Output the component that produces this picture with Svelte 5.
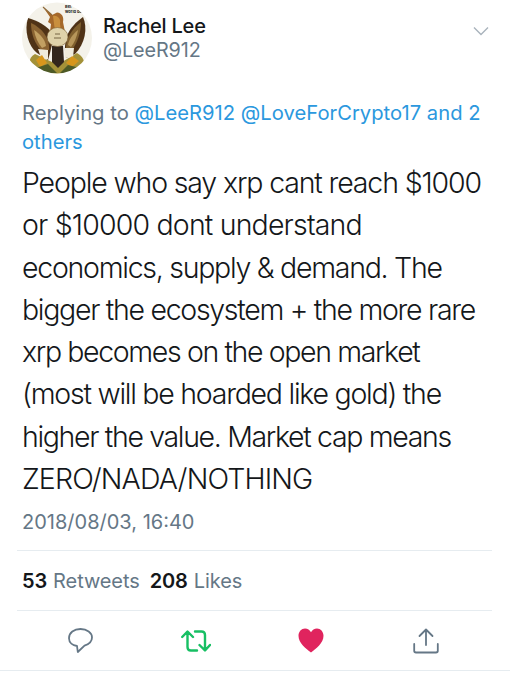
<script>
  const lines = [
    { text: 'People who say xrp cant reach $1000', track: -1.15 },
    { text: 'or $10000 dont understand', track: -0.83 },
    { text: 'economics, supply & demand. The', track: -1.27 },
    { text: 'bigger the ecosystem + the more rare', track: -1.3 },
    { text: 'xrp becomes on the open market', track: -1.38 },
    { text: '(most will be hoarded like gold) the', track: -1.25 },
    { text: 'higher the value. Market cap means', track: -1.34 },
    { text: 'ZERO/NADA/NOTHING', track: -0.87 }
  ];
</script>

<main class="page">
  <header class="head">
    <svg class="avatar" viewBox="0 0 70 72" width="70" height="72" aria-hidden="true">
      <defs>
        <clipPath id="c"><ellipse cx="35" cy="36" rx="35" ry="35.5" /></clipPath>
        <filter id="soft" x="-5%" y="-5%" width="110%" height="110%"><feGaussianBlur stdDeviation="0.55" /></filter>
      </defs>
      <g clip-path="url(#c)">
        <rect width="70" height="72" fill="#f4f2ea" />
        <g filter="url(#soft)">
          <path d="M6 16C2 28 6 44 15 51L26 58C29 48 31 40 31 32C26 24 14 18 6 16Z" fill="#4f3319" />
          <path d="M61 15C66 26 63 42 53 52L44 56C42 48 43 40 45 34C48 26 54 20 61 15Z" fill="#4f3319" />
          <path d="M9 21C9 32 13 42 19 48L27 48C28 36 20 26 9 21Z" fill="#8a6431" />
          <path d="M59 20C59 31 55 41 50 48L44 46C44 36 50 27 59 20Z" fill="#80602f" />
          <path d="M12 28C13 35 16 41 20 46L24 44C23 37 18 32 12 28Z" fill="#c2a062" />
          <path d="M56 28C55 35 52 41 49 45L46 43C47 37 51 32 56 28Z" fill="#b7965a" />
          <path d="M21 5L30 13L35 10.5C40 11 42 15 41 20L43 30L28 30L29 22L26 20L28 15Z" fill="#a5682a" />
          <path d="M31 14C36 13 39 17 38 22L39 29L33 29Z" fill="#c98f3e" />
          <path d="M21 5L30 13" stroke="#8e6a3c" stroke-width="1.1" />
          <path d="M13 52C5 56 7 64 13 72H58C64 64 64 56 55 51L40 60H30Z" fill="#a39138" />
          <path d="M16 47L26 48V57L20 58Z" fill="#efebdc" />
          <path d="M43 46L52 46L51 55L43 56Z" fill="#efebdc" />
          <path d="M30 44H41L42 60L36 66L30 60Z" fill="#33261f" />
          <path d="M14 58L20 53L25 61L18 65ZM44 61L50 54L57 59L50 65Z" fill="#d6961f" />
          <path d="M14 66L26 62L35 71H14ZM38 71L46 63L58 66L52 71Z" fill="#4d5a26" />
          <ellipse cx="35.5" cy="35" rx="10.5" ry="9.5" fill="#dfd2aa" stroke="#7d6033" stroke-width="0.6" />
          <path d="M33 32H38M32 36H39" stroke="#5b4a2c" stroke-width="0.8" />
        </g>
        <text class="tiny" x="43" y="6">Bet</text>
        <text class="tiny" x="43" y="11">world do</text>
      </g>
    </svg>
    <div class="who">
      <div class="name">Rachel Lee</div>
      <div class="handle">@LeeR912</div>
    </div>
    <svg class="chev" viewBox="0 0 16 10" width="16" height="10" aria-hidden="true">
      <path d="M1 1.5L8 8.5L15 1.5" fill="none" stroke="#a9b3bc" stroke-width="1.4" />
    </svg>
  </header>

  <p class="reply">Replying to <span class="link">@LeeR912 @LoveForCrypto17 and 2 others</span></p>

  <div class="body">
    {#each lines as line}<div style="letter-spacing: {line.track}px">{line.text}</div>{/each}
  </div>

  <div class="date">2018/08/03, 16:40</div>

  <div class="stats">
    <b>53</b><span class="lab">Retweets</span><b class="second">208</b><span class="lab">Likes</span>
  </div>

  <div class="actions">
    <svg viewBox="0 0 25 25" width="25" height="25" aria-hidden="true">
      <path d="M12.5 1C6 1 1 4.8 1 10.2C1 14.6 4.8 17.4 9 18L9.8 24L16.5 17.6C20.6 16.2 24 13.4 24 9.4C24 4.6 19 1 12.5 1Z" fill="none" stroke="#657786" stroke-width="1.8" stroke-linejoin="round" />
    </svg>
    <svg viewBox="0 0 30 22" width="30" height="22" aria-hidden="true">
      <path d="M1.2 7L6.5 1.5L12 7M6.5 2V17C6.5 19.4 7.8 20.5 9.8 20.5H16M14 1.5H20.5C22.6 1.5 24 2.8 24 5V20M18.5 15L24 20.5L29 15" fill="none" stroke="#17bf63" stroke-width="2.4" stroke-linecap="round" stroke-linejoin="round" />
    </svg>
    <svg viewBox="0 0 26 25" width="26" height="25" aria-hidden="true">
      <path d="M13 24.5C8 20.5 0.5 15.5 0.5 7.8C0.5 3.6 3.5 0.5 7 0.5C9.6 0.5 11.8 1.9 13 4.3C14.2 1.9 16.4 0.5 19 0.5C22.5 0.5 25.5 3.6 25.5 7.8C25.5 15.5 18 20.5 13 24.5Z" fill="#e0245e" />
    </svg>
    <svg viewBox="0 0 26 26" width="26" height="26" aria-hidden="true">
      <path d="M13 1.5V17M6.5 8L13 1.5L19.5 8M1.2 16V22.8C1.2 23.9 2 24.5 3 24.5H23C24 24.5 24.8 23.9 24.8 22.8V16" fill="none" stroke="#657786" stroke-width="1.8" stroke-linecap="round" stroke-linejoin="round" />
    </svg>
  </div>
</main>

<style>
  :global(body) { margin: 0; background: #fff; }
  .page {
    width: 510px;
    height: 680px;
    overflow: hidden;
    box-sizing: border-box;
    font-family: Inter, "Liberation Sans", sans-serif;
    color: #14171a;
  }
  .head { display: flex; align-items: flex-start; padding: 2px 21px 0 22px; height: 98px; box-sizing: border-box; }
  .avatar { flex: none; }
  .tiny { font-size: 4px; font-weight: 700; fill: #222; }
  .who { margin: 12px 0 0 11px; flex: 1; }
  .name { font-size: 20px; font-weight: 500; line-height: 24px; letter-spacing: -0.2px; }
  .handle { font-size: 19.8px; line-height: 25px; color: #657786; letter-spacing: -0.1px; }
  .chev { margin-top: 24px; }
  .reply { margin: 0; padding: 0 22px; font-size: 20.2px; line-height: 29px; height: 58px; color: #657786; box-sizing: border-box; letter-spacing: 0.02px; }
  .link { color: #2b98de; }
  .body { padding: 6px 0 0 22px; font-size: 28.5px; line-height: 42.3px; white-space: nowrap; font-weight: 300; color: #14171a; }
  .date { padding: 8px 22px 0; font-size: 20px; line-height: 28px; color: #657786; }
  .stats {
    margin: 14px 18px 0 17px;
    padding: 16px 0 0 5px;
    height: 43px;
    border-top: 1px solid #e6ecf0;
    border-bottom: 1px solid #e6ecf0;
    font-size: 20px;
    line-height: 28px;
    letter-spacing: -0.1px;
  }
  .stats b { font-weight: 600; }
  .lab { color: #657786; margin-left: 6px; }
  .second { margin-left: 10px; }
  .actions {
    height: 59px;
    border-bottom: 1px solid #e6ecf0;
    display: grid;
    grid-template-columns: repeat(4, 115px);
    padding-left: 23px;
    align-items: center;
    justify-items: center;
  }
</style>
